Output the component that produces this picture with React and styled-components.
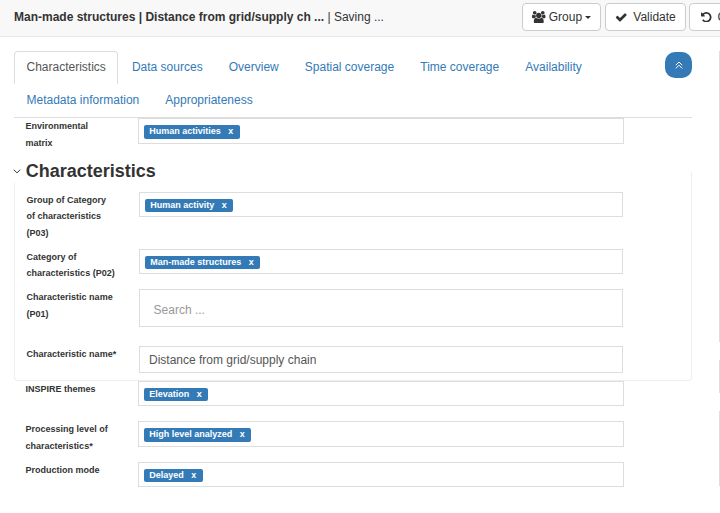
import React from 'react';
import styled, { createGlobalStyle } from 'styled-components';

const GlobalStyle = createGlobalStyle`
  * { box-sizing: border-box; }
  body {
    margin: 0;
    background: #fff;
    color: #333;
    font: 12px/17px "Liberation Sans", Arial, sans-serif;
    overflow: hidden;
  }
`;

const Page = styled.div`
  height: 513px;
  overflow: hidden;
`;

const Toolbar = styled.header`
  display: flex;
  justify-content: space-between;
  height: 37px;
  padding: 3px 0 0 14px;
  background: #f8f8f8;
  border-bottom: 1px solid #e7e7e7;
`;

const Title = styled.div`
  padding-top: 6px;
  white-space: nowrap;
`;

const Actions = styled.div`
  display: flex;
  flex: none;
  gap: 3.6px;
  width: 197.8px;
`;

const Button = styled.button`
  display: flex;
  flex: none;
  align-items: center;
  width: ${(p) => p.$width}px;
  height: 28px;
  padding: 0 0 0 ${(p) => p.$pad || 9}px;
  border: 1px solid #ccc;
  border-radius: 4px;
  background: #fff;
  color: #333;
  font: inherit;
  white-space: nowrap;
`;

const Glyph = styled.svg`
  flex: none;
  display: block;
  width: ${(p) => p.$w}px;
  height: ${(p) => p.$h}px;
  margin-right: ${(p) => p.$gap || 0}px;
  fill: currentColor;
`;

const Caret = styled.span`
  margin: 1px 0 0 3px;
  border-top: 3px solid #333;
  border-left: 3px solid transparent;
  border-right: 3px solid transparent;
`;

const Columns = styled.div`
  display: flex;
  justify-content: space-between;
  padding: 14px 0 0 14px;
`;

const Editor = styled.main`
  width: 678px;
`;

const TabBar = styled.nav`
  display: flex;
  justify-content: space-between;
  height: 67px;
  border-bottom: 1px solid #ddd;
`;

const Tabs = styled.div`
  display: flex;
  flex-wrap: wrap;
  align-content: flex-start;
  column-gap: 1.2px;
  width: 610px;
`;

const Tab = styled.a`
  height: 33px;
  padding: 7px 11.4px 0 11.5px;
  border: 1px solid ${(p) => (p.$active ? '#ddd' : 'transparent')};
  border-bottom: 0;
  border-radius: 4px 4px 0 0;
  color: ${(p) => (p.$active ? '#555' : '#337ab7')};
  white-space: nowrap;
`;

const CollapseButton = styled.button`
  display: flex;
  align-items: center;
  justify-content: center;
  width: 27px;
  height: 26px;
  margin-top: 1px;
  padding: 0;
  border: 0;
  border-radius: 10px;
  background: #337ab7;
  color: #fff;
`;

const Row = styled.div`
  display: flex;
  height: ${(p) => p.$height}px;
  padding-left: 11.6px;
`;

const Label = styled.label`
  flex: none;
  width: 112.4px;
  font-size: 9px;
  font-weight: bold;
  line-height: ${(p) => (p.$tight ? 16.3 : 16.5)}px;
  white-space: pre-line;
`;

const Field = styled.div`
  display: flex;
  align-items: flex-start;
  width: ${(p) => (p.$nested ? 484 : 486)}px;
  height: ${(p) => p.$height}px;
  padding: 6px 0 0 5px;
  border: 1px solid #ddd;
`;

const Chip = styled.span`
  display: flex;
  gap: 7.5px;
  height: ${(p) => p.$height || 13}px;
  padding: 0 6.6px 0 5.2px;
  border-radius: 2px;
  background: #337ab7;
  color: #fff;
  font-size: 9px;
  font-weight: bold;
  line-height: 12px;
  white-space: nowrap;
`;

const TextInput = styled.input`
  width: 484px;
  height: ${(p) => p.$height}px;
  padding: ${(p) => p.$padding};
  border: 1px solid #ddd;
  border-radius: 0;
  outline: 0;
  color: #555;
  font: inherit;
  &::placeholder { color: #999; opacity: 1; }
`;

const SectionTitle = styled.h2`
  display: flex;
  align-items: center;
  height: 24px;
  margin: 0;
  font-size: 18px;
  line-height: 24px;
`;

const Chevron = styled.svg`
  width: 8px;
  height: 5px;
  margin: 0 4.8px 0 -1px;
  fill: none;
  stroke: #333;
`;

const Fieldset = styled.section`
  height: 209px;
  margin-top: -11px;
  padding-top: 20px;
  border-right: 1px solid #eee;
  border-bottom: 1px solid #eee;
  border-left: 1px solid #eee;
  border-radius: 0 0 4px 4px;
`;

const Legend = styled.div`
  position: relative;
  z-index: 1;
  width: 500px;
  margin-top: 15px;
  background: #fff;
`;

const SidePanels = styled.aside`
  display: flex;
  flex-direction: column;
  gap: 18px;
  width: 1px;
`;

const PanelEdge = styled.div`
  height: ${(p) => p.$height}px;
  background: #ddd;
`;

const tabs = ['Characteristics', 'Data sources', 'Overview', 'Spatial coverage', 'Time coverage', 'Availability', 'Metadata information', 'Appropriateness'];

function TagRow({ label, tag, height, box = 25, chip, nested }) {
  return (
    <Row $height={height}>
      <Label $tight={nested}>{label}</Label>
      <Field $height={box} $nested={nested}>
        <Chip $height={chip}><span>{tag}</span><span>x</span></Chip>
      </Field>
    </Row>
  );
}

export default function App() {
  return (
    <Page>
      <GlobalStyle />
      <Toolbar>
        <Title><b>Man-made structures | Distance from grid/supply ch ...</b> | Saving ...</Title>
        <Actions>
          <Button $width={79}>
            <Glyph viewBox="0 0 1920 1792" $w={13.5} $h={12.6} $gap={3}>
              <path d="M593 896q-162 5-265 128h-134q-82 0-138-40.5t-56-118.5q0-353 124-353 6 0 43.5 21t97.5 42.5 119 21.5q67 0 133-23-5 37-5 66 0 139 81 256zm1071 637q0 120-73 189.5t-194 69.5h-874q-121 0-194-69.5t-73-189.5q0-53 3.5-103.5t14-109 26.5-108.5 43-97.5 62-81 85.5-53.5 111.5-20q10 0 43 21.5t73 48 107 48 135 21.5 135-21.5 107-48 73-48 43-21.5q61 0 111.5 20t85.5 53.5 62 81 43 97.5 26.5 108.5 14 109 3.5 103.5zm-1024-1277q0 106-75 181t-181 75-181-75-75-181 75-181 181-75 181 75 75 181zm704 384q0 159-112.5 271.5t-271.5 112.5-271.5-112.5-112.5-271.5 112.5-271.5 271.5-112.5 271.5 112.5 112.5 271.5zm576 225q0 78-56 118.5t-138 40.5h-134q-103-123-265-128 81-117 81-256 0-29-5-66 66 23 133 23 59 0 119-21.5t97.5-42.5 43.5-21q124 0 124 353zm-128-609q0 106-75 181t-181 75-181-75-75-181 75-181 181-75 181 75 75 181z" />
            </Glyph>
            Group <Caret />
          </Button>
          <Button $width={81}>
            <Glyph viewBox="0 0 1792 1792" $w={12.5} $h={12.5} $gap={6}>
              <path d="M1671 566q0 40-28 68l-724 724-136 136q-28 28-68 28t-68-28l-136-136-362-362q-28-28-28-68t28-68l136-136q28-28 68-28t68 28l294 295 656-657q28-28 68-28t68 28l136 136q28 28 28 68z" />
            </Glyph>
            Validate
          </Button>
          <Button $width={80} $pad={11}>
            <Glyph viewBox="128 128 1536 1536" $w={10.5} $h={10.5} $gap={5.5}>
              <path d="M1664 896q0 156-61 298t-164 245-245 164-298 61q-172 0-327-72.5t-264-204.5q-7-10-6.5-22.5t8.5-20.5l137-138q10-9 25-9 16 2 23 12 73 95 179 147t225 52q104 0 198.5-40.5t163.5-109.5 109.5-163.5 40.5-198.5-40.5-198.5-109.5-163.5-163.5-109.5-198.5-40.5q-98 0-188 35.5t-160 101.5l137 138q31 30 14 69-17 40-59 40h-448q-26 0-45-19t-19-45v-448q0-42 40-59 39-17 69 14l130 129q107-101 244.5-156.5t284.5-55.5q156 0 298 61t245 164 164 245 61 298z" />
            </Glyph>
            Cancel
          </Button>
        </Actions>
      </Toolbar>

      <Columns>
        <Editor>
          <TabBar>
            <Tabs>
              {tabs.map((t, i) => <Tab key={t} $active={i === 0}>{t}</Tab>)}
            </Tabs>
            <CollapseButton aria-label="Collapse">
              <Glyph viewBox="0 0 8 8" $w={8} $h={8}>
                <path d="M.8 4.2 4 1l3.2 3.2M.8 7.4 4 4.2l3.2 3.2" fill="none" stroke="currentColor" />
              </Glyph>
            </CollapseButton>
          </TabBar>

          <TagRow label={'Environmental\nmatrix'} tag="Human activities" height={26} box={26} chip={14} />

          <Legend>
            <SectionTitle>
              <Chevron viewBox="0 0 8 5"><path d="M.8.7 4 3.9 7.2.7" /></Chevron>
              Characteristics
            </SectionTitle>
          </Legend>
          <Fieldset>
            <TagRow nested label={'Group of Category\nof characteristics\n(P03)'} tag="Human activity" height={57} />
            <TagRow nested label={'Category of\ncharacteristics (P02)'} tag="Man-made structures" height={40} />
            <Row $height={57}>
              <Label>{'Characteristic name\n(P01)'}</Label>
              <TextInput $height={38} $padding="3px 13.6px 0" placeholder="Search ..." />
            </Row>
            <Row $height={27}>
              <Label>Characteristic name*</Label>
              <TextInput $height={27} $padding="0 9px" defaultValue="Distance from grid/supply chain" />
            </Row>
          </Fieldset>

          <TagRow label="INSPIRE themes" tag="Elevation" height={40} />
          <TagRow label={'Processing level of\ncharacteristics*'} tag="High level analyzed" height={41} box={26} chip={14} />
          <TagRow label="Production mode" tag="Delayed" height={25} />
        </Editor>
        <SidePanels>
          <PanelEdge $height={291} />
          <PanelEdge $height={33} />
          <PanelEdge $height={75} />
        </SidePanels>
      </Columns>
    </Page>
  );
}
